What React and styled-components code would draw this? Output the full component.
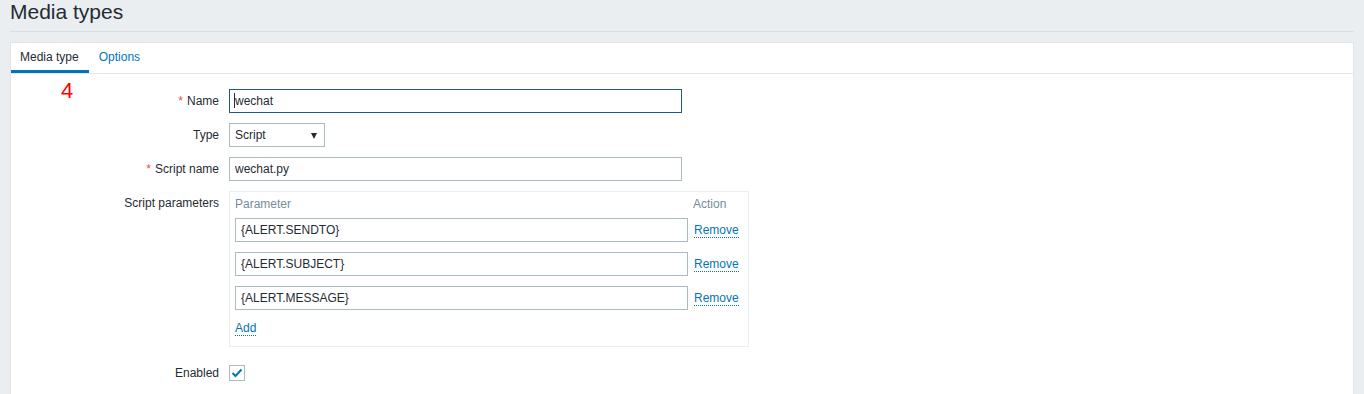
import React from 'react';
import styled, { createGlobalStyle } from 'styled-components';

const GlobalStyle = createGlobalStyle`
  body {
    margin: 0;
    background: #ebeef0;
    font-family: "Liberation Sans", Arial, sans-serif;
    font-size: 12px;
    color: #1f2c33;
  }
`;

const Page = styled.div`
  padding: 0 10px;
`;

const Header = styled.div`
  padding-bottom: 7px;
  border-bottom: 1px solid #dadfe2;
  h1 {
    margin: 0;
    font-size: 21px;
    line-height: 24px;
    font-weight: normal;
    color: #1f2c33;
  }
`;

const Panel = styled.div`
  position: relative;
  margin-top: 10px;
  background: #fff;
  border: 1px solid #dfe4e7;
  min-height: 400px;
`;

const Tabs = styled.ul`
  display: flex;
  margin: 0;
  padding: 0;
  list-style: none;
  border-bottom: 1px solid #e6e9eb;
`;

const Tab = styled.li`
  box-sizing: border-box;
  height: 30px;
  padding: 0 10px 0 9px;
  margin-right: 1px;
  display: flex;
  align-items: center;
  border-bottom: 3px solid ${(p) => (p.$active ? '#0275b8' : 'transparent')};
  color: ${(p) => (p.$active ? '#1f2c33' : '#0275b8')};
  cursor: pointer;
`;

const Marker = styled.span`
  position: absolute;
  left: 50px;
  top: 37px;
  font-size: 22px;
  line-height: 22px;
  color: #ff0000;
`;

const Form = styled.div`
  padding-top: 15px;
  display: flex;
  flex-direction: column;
  gap: 10px;
`;

const Row = styled.div`
  display: flex;
  align-items: ${(p) => (p.$center ? 'center' : 'flex-start')};
  gap: 10px;
  margin-top: ${(p) => p.$offset || 0}px;
`;

const Label = styled.label`
  width: 208px;
  flex-shrink: 0;
  text-align: right;
  line-height: ${(p) => p.$lh || 24}px;
  &::before {
    content: ${(p) => (p.$required ? "'*'" : 'none')};
    color: #e54b4b;
    margin-right: 4px;
  }
`;

const FieldWrap = styled.div`
  position: relative;
`;

const Input = styled.input`
  box-sizing: border-box;
  width: ${(p) => p.$w || 453}px;
  height: 24px;
  margin: 0;
  padding: 0 5px;
  border: 1px solid ${(p) => (p.$focus ? '#1f5a8c' : '#acbbc2')};
  outline: none;
  background: #fff;
  font-family: "Liberation Sans", Arial, sans-serif;
  font-size: 12px;
  color: #1f2c33;
`;

const Caret = styled.span`
  position: absolute;
  left: 5px;
  top: 4px;
  width: 1px;
  height: 15px;
  background: #1f2c33;
`;

const Select = styled.div`
  box-sizing: border-box;
  width: 96px;
  height: 24px;
  padding: 0 7px 0 5px;
  border: 1px solid #acbbc2;
  display: flex;
  align-items: center;
  justify-content: space-between;
  &::after {
    content: '';
    border-left: 3.5px solid transparent;
    border-right: 3.5px solid transparent;
    border-top: 6px solid #1f2c33;
    margin-top: 1px;
  }
`;

const ParamBox = styled.div`
  border: 1px solid #ebeef0;
  padding: 5px 9px 5px 5px;
  display: grid;
  grid-template-columns: 453px auto;
  column-gap: 6px;
  row-gap: 10px;
`;

const HeadCell = styled.div`
  color: #768d99;
  line-height: 14px;
  margin-bottom: -3px;
  margin-left: ${(p) => p.$shift || 0}px;
`;

const LinkCell = styled.div`
  display: flex;
  align-items: center;
`;

const Link = styled.a`
  color: #0275b8;
  text-decoration: none;
  border-bottom: 1px dotted #0275b8;
  line-height: 14px;
  cursor: pointer;
`;

const AddCell = styled.div`
  grid-column: 1 / 3;
  height: 21px;
  padding-top: 1px;
  box-sizing: border-box;
  display: flex;
  align-items: flex-start;
`;

const Checkbox = styled.span`
  box-sizing: border-box;
  width: 16px;
  height: 16px;
  border: 1px solid #acbbc2;
  background: #fff;
  display: flex;
  align-items: center;
  justify-content: center;
`;

const params = ['{ALERT.SENDTO}', '{ALERT.SUBJECT}', '{ALERT.MESSAGE}'];

export default function App() {
  return (
    <Page>
      <GlobalStyle />
      <Header>
        <h1>Media types</h1>
      </Header>
      <Panel>
        <Tabs>
          <Tab $active>Media type</Tab>
          <Tab>Options</Tab>
        </Tabs>
        <Marker>4</Marker>
        <Form>
          <Row>
            <Label $required>Name</Label>
            <FieldWrap>
              <Input $focus readOnly value="wechat" $w={453} />
              <Caret />
            </FieldWrap>
          </Row>
          <Row>
            <Label>Type</Label>
            <Select>Script</Select>
          </Row>
          <Row>
            <Label $required>Script name</Label>
            <Input readOnly value="wechat.py" $w={453} />
          </Row>
          <Row>
            <Label>Script parameters</Label>
            <ParamBox>
              <HeadCell>Parameter</HeadCell>
              <HeadCell $shift={-1}>Action</HeadCell>
              {params.map((p) => (
                <React.Fragment key={p}>
                  <Input readOnly value={p} $w={453} />
                  <LinkCell>
                    <Link>Remove</Link>
                  </LinkCell>
                </React.Fragment>
              ))}
              <AddCell>
                <Link>Add</Link>
              </AddCell>
            </ParamBox>
          </Row>
          <Row $offset={8} $center>
            <Label $lh={16}>Enabled</Label>
            <Checkbox>
              <svg width="12" height="10" viewBox="0 0 12 10">
                <path d="M1.5 5 L4.5 8 L10.5 1.5" fill="none" stroke="#0275b8" strokeWidth="2" />
              </svg>
            </Checkbox>
          </Row>
        </Form>
      </Panel>
    </Page>
  );
}
